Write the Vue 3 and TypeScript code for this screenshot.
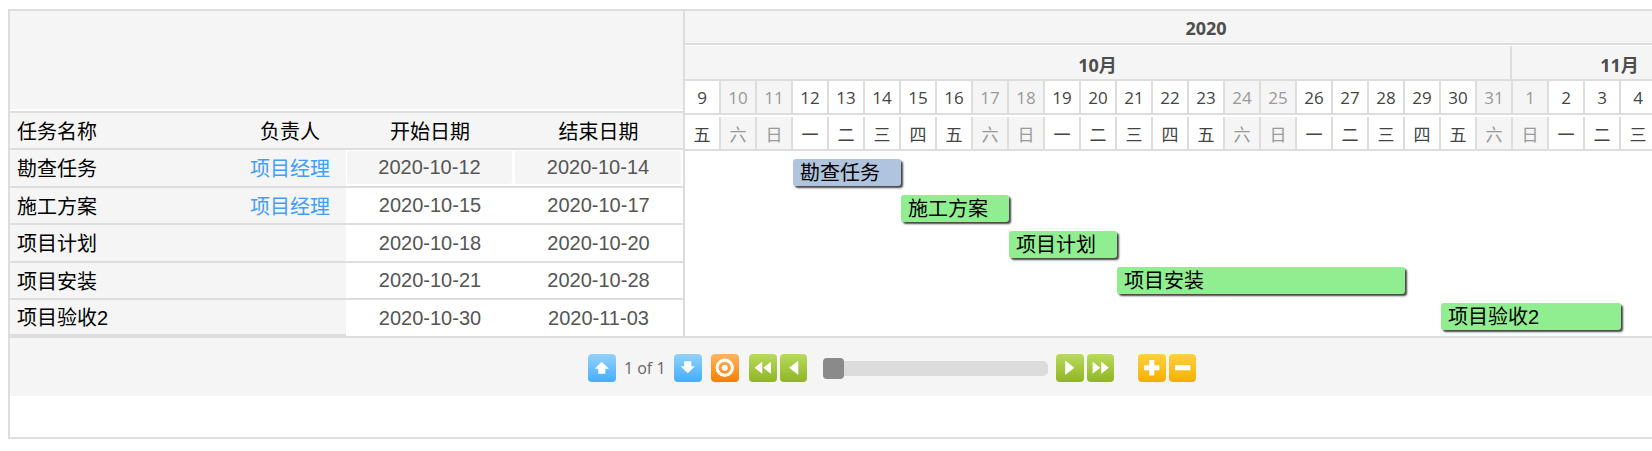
<script setup lang="ts">
import { computed } from 'vue'

interface Task {
  name: string
  owner: string
  start: string
  end: string
  col: number
  span: number
  color: string
}

const CELL = 36

const tasks: Task[] = [
  { name: '勘查任务', owner: '项目经理', start: '2020-10-12', end: '2020-10-14', col: 3, span: 3, color: '#b0c4de' },
  { name: '施工方案', owner: '项目经理', start: '2020-10-15', end: '2020-10-17', col: 6, span: 3, color: '#90ee90' },
  { name: '项目计划', owner: '', start: '2020-10-18', end: '2020-10-20', col: 9, span: 3, color: '#90ee90' },
  { name: '项目安装', owner: '', start: '2020-10-21', end: '2020-10-28', col: 12, span: 8, color: '#90ee90' },
  { name: '项目验收2', owner: '', start: '2020-10-30', end: '2020-11-03', col: 21, span: 5, color: '#90ee90' },
]

const weekNames = ['日', '一', '二', '三', '四', '五', '六']

// 2020-10-09 から 11-04 まで
const days = computed(() => {
  const list = []
  for (let i = 0; i < 27; i++) {
    const d = new Date(2020, 9, 9 + i)
    list.push({
      day: d.getDate(),
      week: weekNames[d.getDay()],
      off: d.getDay() === 0 || d.getDay() === 6,
    })
  }
  return list
})

const barStyle = (t: Task, i: number) => ({
  left: `${(t.col - 1) * CELL + CELL}px`,
  top: `${8 + i * CELL}px`,
  width: `${t.span * CELL}px`,
  background: t.color,
})
</script>

<template>
  <div class="page">
    <div class="gantt">
      <div class="body">
        <div class="left">
          <div class="blank"></div>
          <div class="table">
            <div class="row head">
              <div class="name">任务名称</div>
              <div class="owner">负责人</div>
              <div class="date">开始日期</div>
              <div class="date">结束日期</div>
            </div>
            <div v-for="(t, i) in tasks" :key="t.name" class="row" :class="{ selected: i === 0 }">
              <div class="name">{{ t.name }}</div>
              <div class="owner"><a>{{ t.owner }}</a></div>
              <div class="date value">{{ t.start }}</div>
              <div class="date value">{{ t.end }}</div>
            </div>
          </div>
        </div>

        <div class="right">
          <div class="year">2020</div>
          <div class="months">
            <div class="month oct">10月</div>
            <div class="month nov">11月</div>
          </div>
          <div class="days">
            <div v-for="d in days" :key="d.day + d.week" class="cell" :class="{ off: d.off }">{{ d.day }}</div>
          </div>
          <div class="weeks">
            <div v-for="d in days" :key="d.day + d.week" class="cell" :class="{ off: d.off }">{{ d.week }}</div>
          </div>
          <div class="chart">
            <div v-for="(t, i) in tasks" :key="t.name" class="bar" :style="barStyle(t, i)">{{ t.name }}</div>
          </div>
        </div>
      </div>

      <div class="pager">
        <button class="btn blue">
          <svg viewBox="0 0 27 27"><path d="M13.5 7.5 L20.5 14.5 H17 V19.5 H10 V14.5 H6.5 Z" /></svg>
        </button>
        <span class="count">1 of 1</span>
        <button class="btn blue">
          <svg viewBox="0 0 27 27"><path d="M10 7 H17 V12 H20.5 L13.5 19 L6.5 12 H10 Z" /></svg>
        </button>
        <button class="btn orange">
          <svg viewBox="0 0 27 27">
            <circle cx="13.5" cy="13.5" r="7.5" fill="none" stroke="#fff" stroke-width="3" />
            <circle cx="13.5" cy="13.5" r="3" />
          </svg>
        </button>
        <div class="group first">
          <button class="btn green">
            <svg viewBox="0 0 27 27"><path d="M13 7.5 V19.5 L5.5 13.5 Z M21.5 7.5 V19.5 L14 13.5 Z" /></svg>
          </button>
          <button class="btn green">
            <svg viewBox="0 0 27 27"><path d="M18 6.5 V20.5 L9 13.5 Z" /></svg>
          </button>
        </div>
        <div class="slider"><span class="thumb"></span></div>
        <div class="group">
          <button class="btn green">
            <svg viewBox="0 0 27 27"><path d="M9 6.5 V20.5 L18 13.5 Z" /></svg>
          </button>
          <button class="btn green">
            <svg viewBox="0 0 27 27"><path d="M5.5 7.5 V19.5 L13 13.5 Z M14 7.5 V19.5 L21.5 13.5 Z" /></svg>
          </button>
        </div>
        <div class="group zoom">
          <button class="btn yellow">
            <svg viewBox="0 0 27 27"><path d="M11 6 H16 V11 H21 V16 H16 V21 H11 V16 H6 V11 H11 Z" /></svg>
          </button>
          <button class="btn yellow">
            <svg viewBox="0 0 27 27"><path d="M6 11 H21 V16 H6 Z" /></svg>
          </button>
        </div>
      </div>
    </div>
  </div>
</template>

<style scoped>
.page {
  width: 1652px;
  height: 451px;
  padding: 9px 0 0 8px;
  box-sizing: border-box;
  overflow: hidden;
  background: #fff;
}

.gantt {
  width: 1766px;
  height: 430px;
  box-sizing: border-box;
  border: 2px solid #ddd;
  font-family: "Liberation Sans", "Noto Sans CJK SC", sans-serif;
}

.body {
  display: flex;
  height: 325px;
}

.left {
  width: 673px;
  flex: none;
}

.blank {
  height: 98px;
  margin-bottom: 2px;
  background: #f5f5f5;
}

.table {
  display: grid;
  grid-template-rows: 35px 36px 35px 36px 35px 36px;
  row-gap: 2px;
  border-top: 2px solid #ddd;
  background: #ddd;
}

.row {
  display: grid;
  grid-template-columns: 224px 112px 168px 169px;
  background: #fff;
  font-size: 20px;
  line-height: 1;
  color: #000;
}

.row > div {
  display: flex;
  align-items: center;
  box-sizing: border-box;
  padding-top: 2px;
}

.row > .value {
  padding-top: 0;
  padding-bottom: 1px;
}

.name {
  padding-left: 7px;
  background: #f5f5f5;
}

.owner {
  justify-content: center;
  background: #f5f5f5;
}

.owner a {
  color: #409eff;
}

.date {
  justify-content: center;
}

.value {
  color: #555;
}

.head {
  background: #f5f5f5;
}

.row.selected > .value {
  margin: 1px 2px 2px 1px;
  padding-bottom: 2px;
  border-radius: 3px;
  background: #f5f5f5;
}

.row:last-child .name,
.row:last-child .owner {
  height: 36px;
  border-bottom: 2px solid #ddd;
}

.right {
  width: 1042px;
  flex: none;
  border-left: 2px solid #ddd;
  font-family: "Open Sans", "Noto Sans CJK SC", sans-serif;
}

.year,
.month {
  display: flex;
  align-items: center;
  justify-content: center;
  box-sizing: border-box;
  padding-top: 2px;
  background: #f5f5f5;
  font-size: 18px;
  font-weight: 700;
  color: #4d4d4d;
}

.year {
  height: 34px;
  border-bottom: 2px solid #ddd;
}

.months {
  display: flex;
  box-sizing: border-box;
  height: 36px;
  border-bottom: 2px solid #ddd;
}

.oct {
  width: 827px;
  border-right: 2px solid #ddd;
  margin-top: 1px;
}

.nov {
  flex: 1;
  margin-top: 1px;
}

.days,
.weeks {
  display: flex;
  border-bottom: 2px solid #ddd;
}

.days {
  height: 32px;
}

.weeks {
  height: 32px;
  padding-top: 2px;
}

.cell {
  display: flex;
  flex: none;
  align-items: center;
  justify-content: center;
  box-sizing: border-box;
  width: 36px;
  border-right: 2px solid #ddd;
  font-size: 17px;
  color: #444;
}

.cell.off {
  background: #f5f5f5;
  color: #999;
}

.chart {
  position: relative;
  height: 185px;
}

.bar {
  position: absolute;
  box-sizing: border-box;
  height: 27px;
  padding-left: 7px;
  border-radius: 3px;
  box-shadow: 2px 2px 2px #444;
  font-family: "Liberation Sans", "Noto Sans CJK SC", sans-serif;
  font-size: 20px;
  line-height: 29px;
  color: #000;
  white-space: nowrap;
}

.pager {
  display: flex;
  align-items: center;
  justify-content: center;
  box-sizing: border-box;
  height: 60px;
  padding: 2px 0 0 2px;
  border-top: 2px solid #ddd;
  background: #f5f5f5;
}

.btn {
  display: block;
  flex: none;
  width: 27.5px;
  height: 27.5px;
  padding: 0;
  border: 0;
  border-radius: 4px;
}

.btn svg {
  display: block;
  width: 27.5px;
  height: 27.5px;
  fill: #fff;
}

.blue {
  background: linear-gradient(#93d1ff, #44aeff);
}

.orange {
  margin-left: 9.5px;
  background: linear-gradient(#ffb563, #f77f00);
}

.orange circle:last-child {
  fill: #fff;
}

.green {
  background: linear-gradient(#b9da5c, #8fb524);
}

.yellow {
  background: linear-gradient(#ffd040, #f5b000);
}

.count {
  width: 58.5px;
  font-size: 16px;
  text-align: center;
  color: #666;
  font-family: "Open Sans", sans-serif;
}

.group {
  display: flex;
  gap: 3px;
}

.first {
  margin-left: 10.5px;
}

.zoom {
  margin-left: 24px;
}

.slider {
  width: 225px;
  height: 15px;
  margin: 0 8px 0 16px;
  border-radius: 5px;
  background: #dcdcdc;
}

.thumb {
  display: block;
  width: 21px;
  height: 21px;
  margin-top: -3px;
  border-radius: 4px;
  background: #8a8a8a;
}
</style>
